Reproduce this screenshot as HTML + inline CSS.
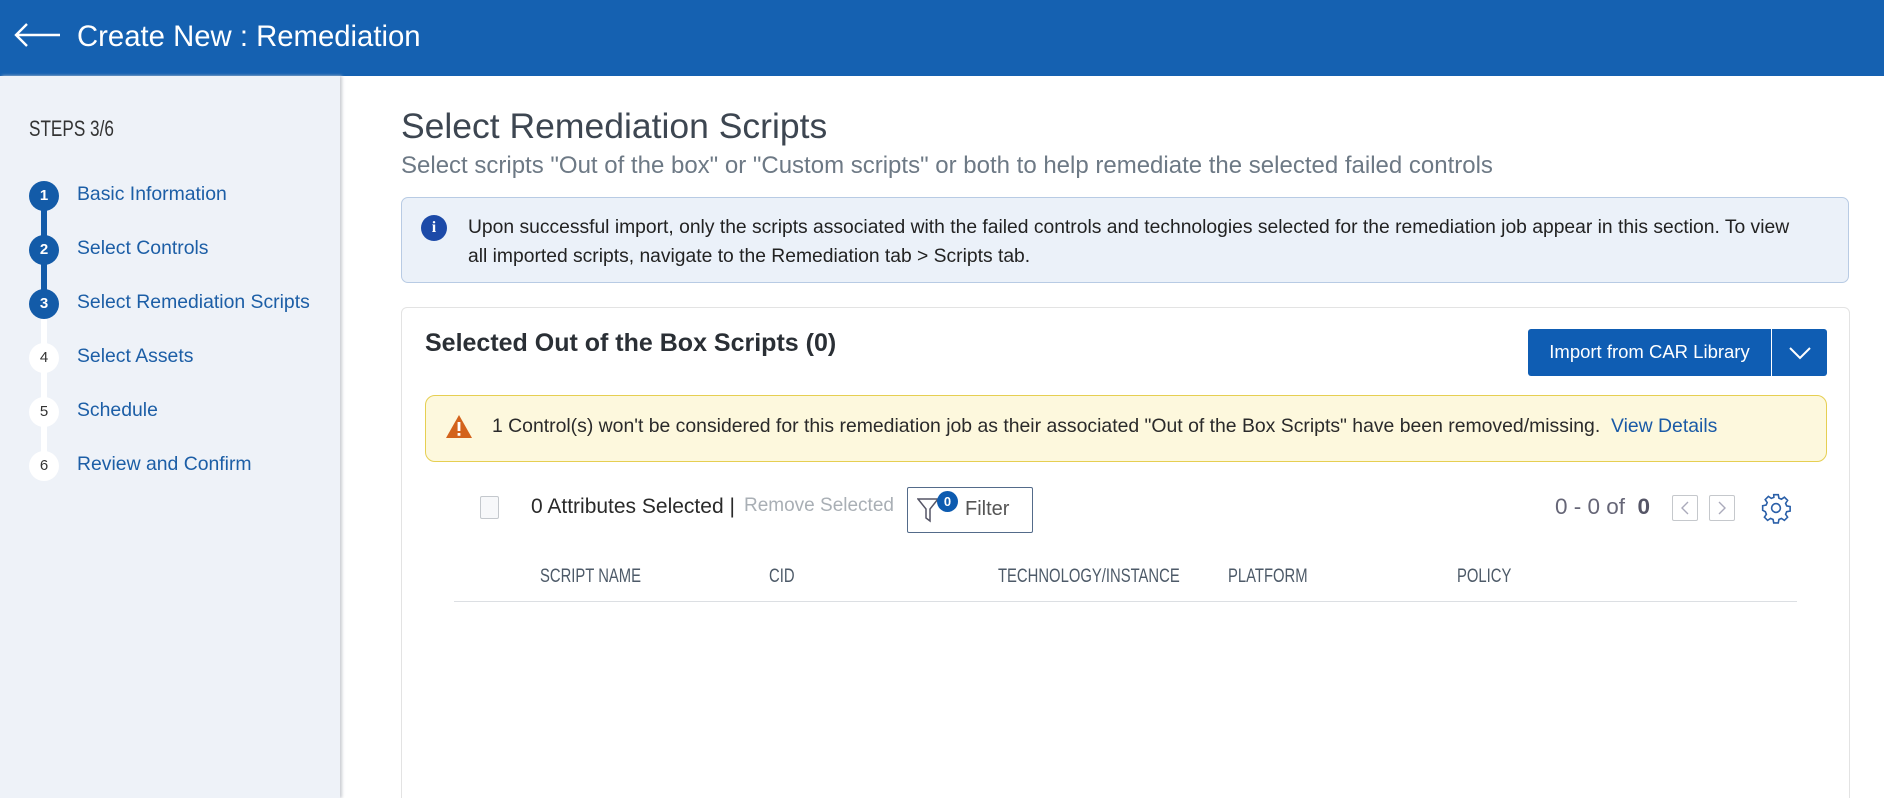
<!DOCTYPE html>
<html style="overflow:hidden;height:798px"><head><style>
*{margin:0;padding:0;box-sizing:border-box}
body{width:1884px;height:798px;overflow:hidden;background:#fff;font-family:"Liberation Sans",sans-serif;position:relative}
.abs{position:absolute;white-space:nowrap}
.hdr{position:absolute;left:0;top:0;width:1884px;height:76px;background:#1561b1}
.side{position:absolute;left:0;top:76px;width:340px;height:722px;background:#eef2f8;box-shadow:2px 0 3px #c9ccd2}
.cond{display:inline-block;transform:scaleX(.78);transform-origin:left center}
.circ{position:absolute;left:29px;width:30px;height:30px;border-radius:50%;text-align:center;line-height:30px;font-size:15px}
.on{background:#135ba8;color:#fff;font-weight:bold}
.off{background:#fff;color:#333}
.lbl{position:absolute;left:77px;font-size:19.4px;color:#1c5ea6}
.th{position:absolute;top:566px;font-size:19px;color:#4d5a68}
</style></head><body>
<div class="hdr"></div>
<svg class="abs" style="left:14px;top:22px" width="48" height="26" viewBox="0 0 48 26"><path d="M46 13H3M13 2L2 13l11 11" stroke="#fff" stroke-width="2.4" fill="none"/></svg>
<div class="abs" style="left:77px;top:20px;font-size:29.3px;color:#fff">Create New : Remediation</div>
<div class="side"></div>
<div class="abs" style="left:29px;top:116px;font-size:22px;color:#333"><span class="cond">STEPS 3/6</span></div>
<div class="abs" style="left:41px;top:200px;width:6px;height:104px;background:#135ba8"></div>
<div class="abs" style="left:41px;top:304px;width:6px;height:162px;background:#fff"></div>
<div class="circ on" style="top:181px">1</div><div class="lbl" style="top:183px">Basic Information</div>
<div class="circ on" style="top:235px">2</div><div class="lbl" style="top:237px">Select Controls</div>
<div class="circ on" style="top:289px">3</div><div class="lbl" style="top:291px">Select Remediation Scripts</div>
<div class="circ off" style="top:343px">4</div><div class="lbl" style="top:345px">Select Assets</div>
<div class="circ off" style="top:397px">5</div><div class="lbl" style="top:399px">Schedule</div>
<div class="circ off" style="top:451px">6</div><div class="lbl" style="top:453px">Review and Confirm</div>

<div class="abs" style="left:401px;top:106px;font-size:35.5px;color:#3d4651">Select Remediation Scripts</div>
<div class="abs" style="left:401px;top:152px;font-size:24px;color:#6d7985">Select scripts "Out of the box" or "Custom scripts" or both to help remediate the selected failed controls</div>
<div class="abs" style="left:401px;top:197px;width:1448px;height:86px;background:#ebf1f9;border:1px solid #b8cbe4;border-radius:7px"></div>
<div class="abs" style="left:421px;top:215px;width:26px;height:26px;border-radius:50%;background:#1c4aa8;color:#fff;text-align:center;font:bold 16px/26px 'Liberation Serif',serif">i</div>
<div class="abs" style="left:468px;top:213px;font-size:19.3px;line-height:29px;color:#222;white-space:normal;width:1325px">Upon successful import, only the scripts associated with the failed controls and technologies selected for the remediation job appear in this section. To view all imported scripts, navigate to the Remediation tab &gt; Scripts tab.</div>

<div class="abs" style="left:401px;top:307px;width:1449px;height:500px;border:1px solid #e3e3e3;border-radius:6px"></div>
<div class="abs" style="left:425px;top:329px;font-size:25px;font-weight:bold;color:#2a2f35">Selected Out of the Box Scripts (0)</div>
<div class="abs" style="left:1528px;top:329px;width:299px;height:47px;background:#0f5db3;border-radius:3px"></div>
<div class="abs" style="left:1771px;top:329px;width:1px;height:47px;background:#fff"></div>
<div class="abs" style="left:1528px;top:341px;width:243px;text-align:center;font-size:18.5px;color:#fff">Import from CAR Library</div>
<svg class="abs" style="left:1788px;top:345px" width="24" height="16"><path d="M2 3l10 10 10-10" stroke="#fff" stroke-width="2" fill="none"/></svg>

<div class="abs" style="left:425px;top:395px;width:1402px;height:67px;background:#fdf8dd;border:1px solid #e6cf52;border-radius:10px"></div>
<svg class="abs" style="left:445px;top:414px" width="28" height="25" viewBox="0 0 28 25"><path d="M14 1L27 24H1Z" fill="#d3631c"/><rect x="12.6" y="8" width="2.8" height="9" fill="#fff"/><rect x="12.6" y="19" width="2.8" height="2.8" fill="#fff"/></svg>
<div class="abs" style="left:492px;top:415px;font-size:19.4px;color:#2a2a2a">1 Control(s) won't be considered for this remediation job as their associated "Out of the Box Scripts" have been removed/missing.&nbsp; <span style="color:#1a5aa6">View Details</span></div>

<div class="abs" style="left:480px;top:496px;width:19px;height:23px;border:1px solid #c4c8cd;border-radius:2px;background:#f7f8fa"></div>
<div class="abs" style="left:531px;top:495px;font-size:21px;color:#2a2a2a">0 Attributes Selected |</div>
<div class="abs" style="left:744px;top:495px;font-size:19px;color:#a9afb5">Remove Selected</div>
<div class="abs" style="left:907px;top:487px;width:126px;height:46px;border:1px solid #536b8a;border-radius:2px"></div>
<svg class="abs" style="left:917px;top:497px" width="22" height="26" viewBox="0 0 22 26"><path d="M1 2h20l-8 10v12l-4-3v-9Z" stroke="#556" stroke-width="1.5" fill="none"/></svg>
<div class="abs" style="left:937px;top:491px;width:21px;height:21px;border-radius:50%;background:#0d5bb0;color:#fff;text-align:center;font:bold 13px/21px 'Liberation Sans',sans-serif">0</div>
<div class="abs" style="left:965px;top:498px;font-size:20px;color:#555">Filter</div>
<div class="abs" style="left:1555px;top:494px;font-size:22.5px;color:#667">0 - 0 of &nbsp;<b style="color:#556">0</b></div>
<div class="abs" style="left:1672px;top:495px;width:26px;height:26px;border:1.5px solid #c5c8cc;border-radius:2px"></div>
<div class="abs" style="left:1709px;top:495px;width:26px;height:26px;border:1.5px solid #c5c8cc;border-radius:2px"></div>
<svg class="abs" style="left:1672px;top:495px" width="64" height="26"><path d="M16 7l-6 6 6 6M47 7l6 6-6 6" stroke="#aab" stroke-width="1.4" fill="none"/></svg>
<svg class="abs" style="left:1760px;top:492px" width="32" height="32" viewBox="0 0 24 24"><path d="M10.3 2h3.4l.5 2.6 1.9.8 2.2-1.5 2.4 2.4-1.5 2.2.8 1.9 2.6.5v3.4l-2.6.5-.8 1.9 1.5 2.2-2.4 2.4-2.2-1.5-1.9.8-.5 2.6h-3.4l-.5-2.6-1.9-.8-2.2 1.5-2.4-2.4 1.5-2.2-.8-1.9L2 13.7v-3.4l2.6-.5.8-1.9-1.5-2.2 2.4-2.4 2.2 1.5 1.9-.8Z" stroke="#2a5fa8" stroke-width="1.2" fill="none"/><circle cx="12" cy="12" r="3.3" stroke="#2a5fa8" stroke-width="1.2" fill="none"/></svg>

<div class="th" style="left:540px"><span class="cond">SCRIPT NAME</span></div>
<div class="th" style="left:769px"><span class="cond">CID</span></div>
<div class="th" style="left:998px"><span class="cond">TECHNOLOGY/INSTANCE</span></div>
<div class="th" style="left:1228px"><span class="cond">PLATFORM</span></div>
<div class="th" style="left:1457px"><span class="cond">POLICY</span></div>
<div class="abs" style="left:454px;top:601px;width:1343px;height:1px;background:#dcdfe3"></div>
</body></html>
